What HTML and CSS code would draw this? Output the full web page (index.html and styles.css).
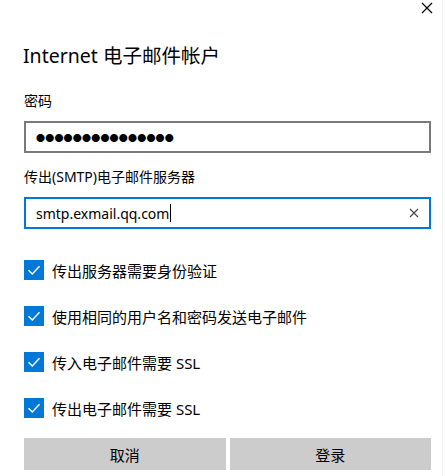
FILE: index.html
```html
<!DOCTYPE html>
<html lang="zh-CN">
<head>
    <meta charset="UTF-8">
    <meta name="viewport" content="width=device-width, initial-scale=1.0">
    <title>Internet 电子邮件帐户</title>
    <link rel="stylesheet" href="styles.css">
</head>
<body>
    <div class="dialog">
        <div class="top-bar">
            <button class="close-btn" title="关闭">
                <svg width="12" height="12" viewBox="0 0 12 12"><path d="M1 1L11 11M11 1L1 11" stroke="#000" stroke-width="1.2"/></svg>
            </button>
        </div>

        <h1 class="dialog-title">Internet 电子邮件帐户</h1>

        <div class="field">
            <label class="field-label">密码</label>
            <div class="text-box">
                <span class="password-dots">●●●●●●●●●●●●●●●</span>
            </div>
        </div>

        <div class="field">
            <label class="field-label">传出(SMTP)电子邮件服务器</label>
            <div class="text-box focused">
                <span class="box-value">smtp.exmail.qq.com</span><span class="caret"></span>
                <span class="clear-btn">
                    <svg width="10" height="10" viewBox="0 0 10 10"><path d="M1 1L9 9M9 1L1 9" stroke="#444" stroke-width="1.1"/></svg>
                </span>
            </div>
        </div>

        <div class="checks">
            <div class="check-row"><span class="check-box"><svg width="20" height="20" viewBox="0 0 20 20"><path d="M4.5 10.2L8.3 14L15.5 6.3" fill="none" stroke="#fff" stroke-width="1.5"/></svg></span>传出服务器需要身份验证</div>
            <div class="check-row"><span class="check-box"><svg width="20" height="20" viewBox="0 0 20 20"><path d="M4.5 10.2L8.3 14L15.5 6.3" fill="none" stroke="#fff" stroke-width="1.5"/></svg></span>使用相同的用户名和密码发送电子邮件</div>
            <div class="check-row"><span class="check-box"><svg width="20" height="20" viewBox="0 0 20 20"><path d="M4.5 10.2L8.3 14L15.5 6.3" fill="none" stroke="#fff" stroke-width="1.5"/></svg></span>传入电子邮件需要 SSL</div>
            <div class="check-row"><span class="check-box"><svg width="20" height="20" viewBox="0 0 20 20"><path d="M4.5 10.2L8.3 14L15.5 6.3" fill="none" stroke="#fff" stroke-width="1.5"/></svg></span>传出电子邮件需要 SSL</div>
        </div>

        <div class="actions">
            <button class="action-btn">取消</button>
            <button class="action-btn">登录</button>
        </div>
    </div>
</body>
</html>
```

FILE: styles.css
```css
body {
    margin: 0;
    background: #fff;
    font-family: "Segoe UI", "Noto Sans", "Noto Sans CJK SC", sans-serif;
    color: #000;
}
.dialog {
    width: 443px;
    height: 476px;
    border-right: 1px solid #f3f3f3;
    box-sizing: border-box;
    padding: 0 11px 0 24px;
}
.top-bar {
    display: flex;
    justify-content: flex-end;
    height: 20px;
    margin-right: -8px;
}
.close-btn {
    width: 24px;
    height: 18px;
    border: none;
    background: none;
    padding: 2px 0 0;
    display: flex;
    justify-content: center;
    align-items: flex-start;
}
.dialog-title {
    font-size: 19.5px;
    font-weight: normal;
    line-height: 28px;
    margin: 22px 0 0 -1px;
}
.field {
    margin-top: 21px;
}
.field + .field {
    margin-top: 14px;
}
.field-label {
    display: block;
    font-size: 14px;
    line-height: 20px;
    margin-bottom: 10px;
}
.text-box {
    height: 32px;
    border: 2px solid #7a7a7a;
    box-sizing: border-box;
    display: flex;
    align-items: center;
    padding: 0 10px;
}
.text-box.focused {
    border-color: #0078d7;
}
.password-dots {
    font-size: 9px;
    letter-spacing: 0.2px;
    color: #000;
}
.box-value {
    font-size: 14px;
}
.caret {
    width: 1px;
    height: 18px;
    background: #000;
    margin-left: 1px;
}
.clear-btn {
    margin-left: auto;
    display: flex;
    padding-right: 0;
}
.checks {
    margin-top: 31px;
    display: flex;
    flex-direction: column;
    gap: 26px;
}
.check-row {
    display: flex;
    align-items: center;
    height: 20px;
    font-size: 15px;
}
.check-box {
    width: 20px;
    height: 20px;
    background: #0078d7;
    margin-right: 8px;
    display: flex;
}
.actions {
    margin-top: 20px;
    display: grid;
    grid-template-columns: 1fr 1fr;
    gap: 4px;
}
.action-btn {
    height: 32px;
    border: none;
    background: #cccccc;
    font-family: inherit;
    font-size: 15px;
    color: #000;
}
```
